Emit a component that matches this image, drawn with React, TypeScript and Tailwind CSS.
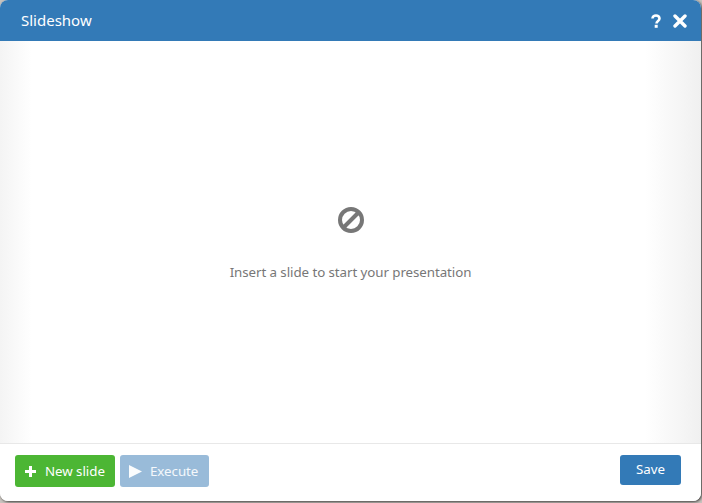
import React from "react";

export default function App() {
  return (
    <div className="h-[503px] w-[702px] overflow-hidden bg-[#c9c4bf] font-['Noto_Sans',sans-serif]">
      <div className="flex h-[501px] w-[701px] flex-col overflow-hidden rounded-[8px] bg-white shadow-[1px_1px_3px_rgba(0,0,0,0.7)]">
        <header className="flex h-[41px] shrink-0 items-center justify-between bg-[#337ab7] pl-[21px] pr-[14px] text-white">
          <span className="text-[15px]">Slideshow</span>
          <div className="flex items-center gap-[12px]">
            <svg width="10" height="14" viewBox="0 0 10 14" fill="none">
              <path d="M1.5 4.5C1.5 2.5 3 1.5 5 1.5s3.5 1 3.5 3c0 2.6-3 2.4-3 5" stroke="#fff" strokeWidth="2.6" />
              <rect x="3.7" y="10.8" width="3" height="3" fill="#fff" />
            </svg>
            <svg width="14" height="14" viewBox="0 0 14 14" fill="none">
              <path d="M2 2l10 10M12 2L2 12" stroke="#fff" strokeWidth="3.4" strokeLinecap="round" />
            </svg>
          </div>
        </header>
        <main className="flex flex-1 flex-col items-center bg-[linear-gradient(90deg,#f4f4f4_0px,#ffffff_32px,#ffffff_645px,#f0f0f0_100%)] pt-[166px]">
          <svg width="26" height="26" viewBox="0 0 26 26" fill="none">
            <circle cx="13" cy="13" r="11" stroke="#777777" strokeWidth="4" />
            <path d="M5.5 20.5L20.5 5.5" stroke="#777777" strokeWidth="4" />
          </svg>
          <p className="mt-[29px] text-[13.33px] leading-[20px] tracking-[-0.07px] text-[#777777]">Insert a slide to start your presentation</p>
        </main>
        <footer className="flex h-[58px] shrink-0 items-start justify-between border-t border-[#e8e8e8] bg-white pl-[15px] pr-[20px] pt-[11px] text-[13.33px] tracking-[-0.05px] text-white">
          <div className="flex gap-[5px]">
            <button className="flex h-[32px] w-[100px] items-center gap-[9px] rounded-[3px] bg-[#4cb634] pl-[10px]">
              <svg width="11" height="11" viewBox="0 0 11 11"><path d="M4 0h3v4h4v3H7v4H4V7H0V4h4z" fill="#fff" /></svg>
              <span className="pt-[2px]">New slide</span>
            </button>
            <button className="flex h-[32px] w-[89px] items-center gap-[8px] rounded-[3px] bg-[#99bbd9] pl-[9px]">
              <svg width="13" height="13" viewBox="0 0 13 13"><path d="M0 0l13 6.5L0 13z" fill="#fff" fillOpacity="0.95" /></svg>
              <span className="pt-[2px] text-white/90">Execute</span>
            </button>
          </div>
          <button className="h-[30px] w-[61px] rounded-[3px] bg-[#337ab7]">Save</button>
        </footer>
      </div>
    </div>
  );
}
